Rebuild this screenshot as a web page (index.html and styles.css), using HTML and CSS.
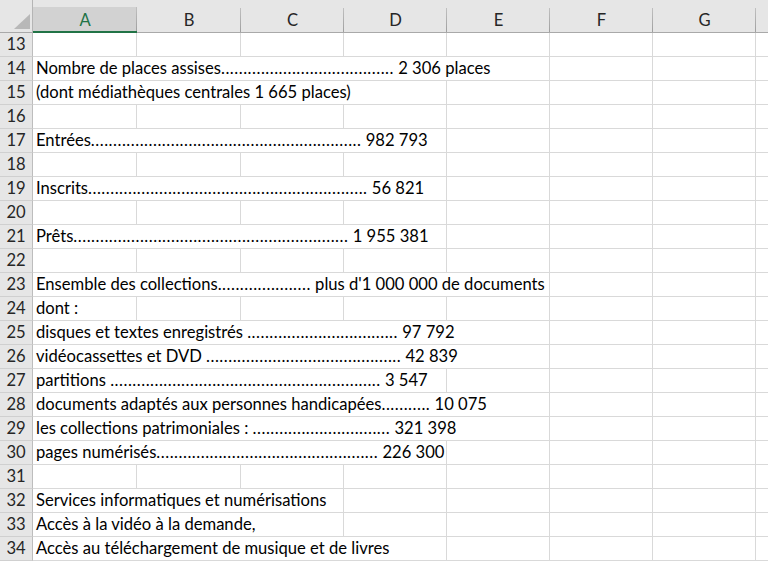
FILE: index.html
```html
<!DOCTYPE html>
<html lang="fr">
<head>
<meta charset="utf-8">
<title>Feuille</title>
<link rel="stylesheet" href="styles.css">
</head>
<body>
<div class="sheet">
  <div class="corner"><span class="tri"></span></div>
  <div class="ch sel">A</div><div class="ch">B</div><div class="ch">C</div><div class="ch">D</div><div class="ch">E</div><div class="ch">F</div><div class="ch">G</div><div class="ch last"></div>

  <div class="rh">13</div><div class="c"></div><div class="c"></div><div class="c"></div><div class="c"></div><div class="c"></div><div class="c"></div><div class="c"></div><div class="c last"></div>

  <div class="rh">14</div><div class="c s5">Nombre de places assises<span class="d">.......................................</span> 2 306 places</div><div class="c"></div><div class="c"></div><div class="c last"></div>

  <div class="rh">15</div><div class="c s4">(dont médiathèques centrales 1 665 places)</div><div class="c"></div><div class="c"></div><div class="c"></div><div class="c last"></div>

  <div class="rh">16</div><div class="c"></div><div class="c"></div><div class="c"></div><div class="c"></div><div class="c"></div><div class="c"></div><div class="c"></div><div class="c last"></div>

  <div class="rh">17</div><div class="c s4">Entrées<span class="d">.............................................................</span> 982 793</div><div class="c"></div><div class="c"></div><div class="c"></div><div class="c last"></div>

  <div class="rh">18</div><div class="c"></div><div class="c"></div><div class="c"></div><div class="c"></div><div class="c"></div><div class="c"></div><div class="c"></div><div class="c last"></div>

  <div class="rh">19</div><div class="c s4">Inscrits<span class="d">...............................................................</span> 56 821</div><div class="c"></div><div class="c"></div><div class="c"></div><div class="c last"></div>

  <div class="rh">20</div><div class="c"></div><div class="c"></div><div class="c"></div><div class="c"></div><div class="c"></div><div class="c"></div><div class="c"></div><div class="c last"></div>

  <div class="rh">21</div><div class="c s4">Prêts<span class="d">..............................................................</span> 1 955 381</div><div class="c"></div><div class="c"></div><div class="c"></div><div class="c last"></div>

  <div class="rh">22</div><div class="c"></div><div class="c"></div><div class="c"></div><div class="c"></div><div class="c"></div><div class="c"></div><div class="c"></div><div class="c last"></div>

  <div class="rh">23</div><div class="c s5">Ensemble des collections<span class="d">.....................</span> plus d'1 000 000 de documents</div><div class="c"></div><div class="c"></div><div class="c last"></div>

  <div class="rh">24</div><div class="c">dont :</div><div class="c"></div><div class="c"></div><div class="c"></div><div class="c"></div><div class="c"></div><div class="c"></div><div class="c last"></div>

  <div class="rh">25</div><div class="c s5">disques et textes enregistrés <span class="d">..................................</span> 97 792</div><div class="c"></div><div class="c"></div><div class="c last"></div>

  <div class="rh">26</div><div class="c s5">vidéocassettes et DVD <span class="d">............................................</span> 42 839</div><div class="c"></div><div class="c"></div><div class="c last"></div>

  <div class="rh">27</div><div class="c s4">partitions <span class="d">.............................................................</span> 3 547</div><div class="c"></div><div class="c"></div><div class="c"></div><div class="c last"></div>

  <div class="rh">28</div><div class="c s5">documents adaptés aux personnes handicapées<span class="d">...........</span> 10 075</div><div class="c"></div><div class="c"></div><div class="c last"></div>

  <div class="rh">29</div><div class="c s5">les collections patrimoniales : <span class="d">...............................</span> 321 398</div><div class="c"></div><div class="c"></div><div class="c last"></div>

  <div class="rh">30</div><div class="c s4">pages numérisés<span class="d">..................................................</span> 226 300</div><div class="c"></div><div class="c"></div><div class="c"></div><div class="c last"></div>

  <div class="rh">31</div><div class="c"></div><div class="c"></div><div class="c"></div><div class="c"></div><div class="c"></div><div class="c"></div><div class="c"></div><div class="c last"></div>

  <div class="rh">32</div><div class="c s3">Services informatiques et numérisations</div><div class="c"></div><div class="c"></div><div class="c"></div><div class="c"></div><div class="c last"></div>

  <div class="rh">33</div><div class="c s3">Accès à la vidéo à la demande,</div><div class="c"></div><div class="c"></div><div class="c"></div><div class="c"></div><div class="c last"></div>

  <div class="rh">34</div><div class="c s4">Accès au téléchargement de musique et de livres</div><div class="c"></div><div class="c"></div><div class="c"></div><div class="c last"></div>
</div>
</body>
</html>
```

FILE: styles.css
```css
html, body {
  margin: 0;
  padding: 0;
  background: #ffffff;
  overflow: hidden;
}

.sheet {
  display: grid;
  grid-template-columns: 33px 104px 104px 103px 103px 103px 103px 103px 1fr;
  grid-auto-rows: 24px;
  grid-template-rows: 33px;
  width: 768px;
  height: 561px;
  overflow: hidden;
  font-family: Lato, "Liberation Sans", sans-serif;
  font-size: 16.6px;
  line-height: 23px;
  color: #000;
}

.corner {
  box-sizing: border-box;
  background: #e6e6e6;
  border-right: 1px solid #b5b5b5;
  border-bottom: 1px solid #a9a9a9;
  display: flex;
  align-items: flex-end;
  justify-content: flex-end;
  padding: 0 2px 3px 0;
}

.tri {
  width: 16px;
  height: 15px;
  background: #b8b8b8;
  clip-path: polygon(100% 0, 100% 100%, 0 100%);
}

.ch {
  box-sizing: border-box;
  padding-top: 9px;
  text-align: center;
  color: #262626;
  background: linear-gradient(#c0c0c0, #9f9f9f) right bottom / 1px 24px no-repeat, #e6e6e6;
  border-bottom: 1px solid #a9a9a9;
}

.ch.sel {
  color: #217346;
  background: linear-gradient(#c0c0c0, #9f9f9f) right bottom / 1px 24px no-repeat,
              linear-gradient(#d2d2d2, #d2d2d2) left bottom / 100% 24px no-repeat, #e6e6e6;
  border-bottom: 2px solid #217346;
}

.ch.last {
  background: #e6e6e6;
}

.rh {
  box-sizing: border-box;
  text-align: center;
  color: #262626;
  background: #e6e6e6;
  border-right: 1px solid #bdbdbd;
  border-bottom: 1px solid #d0d0d0;
}

.c {
  box-sizing: border-box;
  border-right: 1px solid #d9d9d9;
  border-bottom: 1px solid #d9d9d9;
  padding-left: 3px;
  white-space: nowrap;
  overflow: visible;
}

.c.last {
  border-right: none;
}

.s3 { grid-column: span 3; }
.s4 { grid-column: span 4; }
.s5 { grid-column: span 5; }

.d {
  letter-spacing: 0.52px;
}
```
